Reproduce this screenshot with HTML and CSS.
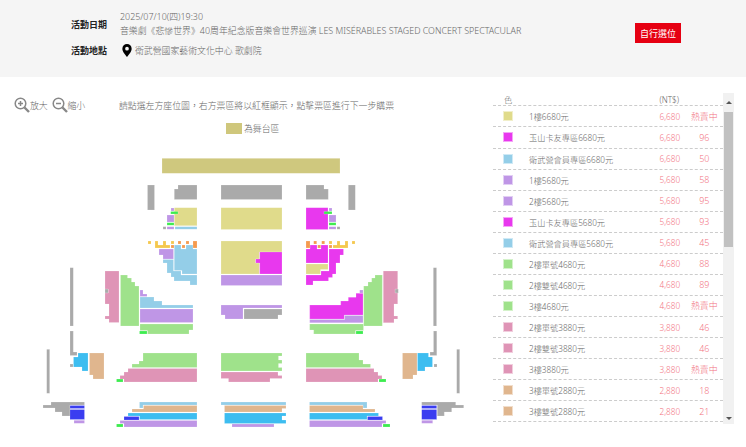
FILE: index.html
```html
<!DOCTYPE html>
<html lang="zh-Hant">
<head>
<meta charset="utf-8">
<title>選位</title>
<link rel="stylesheet" href="styles.css">
</head>
<body>
<header class="info">
  <div class="info-main">
    <div class="info-row info-row-date">
      <div class="info-label">活動日期</div>
      <div class="info-value">
        <div class="date-line">2025/07/10(四)19:30</div>
        <div class="title-line">音樂劇《悲慘世界》40周年紀念版音樂會世界巡演 LES MISÉRABLES STAGED CONCERT SPECTACULAR</div>
      </div>
    </div>
    <div class="info-row info-row-place">
      <div class="info-label">活動地點</div>
      <div class="info-value place">
        <svg class="pin" viewBox="0 0 10 14" width="10" height="13"><path fill-rule="evenodd" d="M5 0a5 5 0 0 1 5 5c0 3.400-3.400 6.600-5 9-1.600-2.400-5-5.600-5-9a5 5 0 0 1 5-5zm0 3a2 2 0 1 0 0 4 2 2 0 0 0 0-4z"/></svg>
        <span>衛武營國家藝術文化中心 歌劇院</span>
      </div>
    </div>
  </div>
  <button class="self-pick">自行選位</button>
</header>
<main class="content">
  <section class="map-panel">
    <div class="toolbar">
      <div class="zoom-btn">
        <svg class="zoom-icon" viewBox="0 0 16 16" width="16" height="16"><circle cx="6.500" cy="6.500" r="5.300"/><path class="thick" d="M10.500 10.500l4.500 4.500"/><path d="M4 6.500h5M6.500 4v5"/></svg>
        <span>放大</span>
      </div>
      <div class="zoom-btn">
        <svg class="zoom-icon" viewBox="0 0 16 16" width="16" height="16"><circle cx="6.500" cy="6.500" r="5.300"/><path class="thick" d="M10.500 10.500l4.500 4.500"/><path d="M4 6.500h5"/></svg>
        <span>縮小</span>
      </div>
      <p class="hint">請點選左方座位圖，右方票區將以紅框顯示，點擊票區進行下一步購票</p>
    </div>
    <div class="legend"><span class="legend-swatch"></span><span>為舞台區</span></div>
    <svg class="seatmap" viewBox="0 150 493 297" width="493" height="297">
      <rect class="stage" x="162" y="157.300" width="178" height="15"/>
      <g class="grey">
        <rect x="147.500" y="184" width="7" height="25"/>
        <polygon points="178,184 197,184 197,198.500 174.300,198.500 174.300,188 178,188"/>
        <rect x="221" y="184" width="61" height="14.500"/>
        <polygon points="306,184 324,184 324,188 328.300,188 328.300,198.500 306,198.500"/>
        <rect x="348.300" y="184" width="7" height="25"/>
        <rect x="163" y="225.700" width="3" height="2.500"/>
        <rect x="337" y="225.700" width="3" height="2.500"/>
        <rect x="70" y="266.700" width="3.300" height="58.300"/>
        <rect x="433.300" y="266.700" width="3.300" height="58.300"/>
        <polygon points="244,308 282,308 282,314 278,314 278,318 244,318"/>
        <polygon points="70,330 73.300,330 73.300,351 77,351 77,354.500 70,354.500"/>
        <polygon points="433.500,330 436.800,330 436.800,354.500 430,354.500 430,351 433.500,351"/>
        <rect x="46.700" y="348.300" width="3" height="44"/>
        <rect x="456.700" y="348.300" width="3" height="44"/>
        <rect x="70" y="363" width="3" height="3"/>
        <rect x="434" y="363" width="3" height="3"/>
        <rect x="105" y="288" width="3.300" height="4"/>
        <rect x="395" y="288" width="3.300" height="4"/>
        <polygon points="51,401 84.500,401 84.500,404 70,404 70,415 62,415 62,411 55,411 55,407 43,407 43,404 51,404"/>
        <polygon points="421.700,401 455.700,401 455.700,404 463.700,404 463.700,407 451.700,407 451.700,411 444.300,411 444.300,415 437.300,415 437.300,404 421.700,404"/>
      </g>
      <g class="yellow">
        <rect x="174.300" y="206.700" width="22.700" height="18"/>
        <rect x="221" y="206.700" width="61" height="21.800"/>
        <polygon points="221,240 282,240 282,251 259.300,251 259.300,258 255.500,258 255.500,262 259.300,262 259.300,273 221,273"/>
        <polygon points="306,263 328,263 328,268.500 320.500,268.500 320.500,273 306,273"/>
      </g>
      <g class="magenta">
        <rect x="306" y="206.700" width="22" height="21.800"/>
        <polygon points="259.700,251 282,251 282,273 259.700,273 259.700,262 255.700,262 255.700,258 259.700,258"/>
        <polygon points="306,248 310,248 310,244 317,244 317,248 321,248 321,244 328,244 328,262 306,262"/>
        <polygon points="329,248 343.500,248 343.500,254 340,254 340,262 336,262 336,273 332.500,273 332.500,276.500 328.500,276.500 328.500,280 313,280 313,284 306,284 306,274 321,274 321,270 329,270"/>
        <polygon points="309.700,304 340.700,304 340.700,300 348.300,300 348.300,296.300 356,296.300 356,292.300 363,292.300 363,314 344.300,314 344.300,318 309.700,318"/>
      </g>
      <g class="purple">
        <rect x="171" y="207" width="3" height="3"/>
        <rect x="167" y="214" width="7" height="7"/>
        <rect x="167" y="225.700" width="7" height="2.500"/>
        <rect x="329" y="207" width="3" height="3"/>
        <rect x="329" y="214" width="7" height="7"/>
        <rect x="329" y="225.700" width="7" height="2.500"/>
        <polygon points="159,248 173.500,248 173.500,258 163,258 163,254 159,254"/>
        <rect x="221" y="274" width="61" height="10.500"/>
        <polygon points="140,289 143,289 143,293 147,293 147,295.500 140,295.500"/>
        <rect x="140" y="308" width="53" height="13.500"/>
        <polygon points="221,304 282,304 282,307 243,307 243,318 225,318 225,314 221,314"/>
        <polygon points="344.700,314.500 363,314.500 363,321.700 309.700,321.700 309.700,318.500 344.700,318.500"/>
        <rect x="359.700" y="289" width="3.300" height="3"/>
        <polygon points="120,419.500 197,419.500 197,426 124,426 124,422.500 120,422.500"/>
        <rect x="232" y="423" width="42" height="3"/>
        <polygon points="309.500,419.500 386,419.500 386,422.500 382,422.500 382,426 309.500,426"/>
        <rect x="74" y="419.300" width="10.500" height="3"/>
        <rect x="421.700" y="419.300" width="11" height="3"/>
      </g>
      <g class="blue">
        <rect x="175" y="225.700" width="22" height="2.500"/>
        <polygon points="174.300,244 181,244 181,248 186,248 186,244 193,244 193,248 197,248 197,273 182,273 182,269.500 174.300,269.500"/>
        <polygon points="163,258.500 173.500,258.500 173.500,270 181,270 181,274 197,274 197,284 190,284 190,280 174,280 174,276 171,276 171,272 167,272 167,262 163,262"/>
        <polygon points="140,296 154,296 154,300 162,300 162,304 193,304 193,307 140,307"/>
        <polygon points="139.500,401 197,401 197,404 143,404 143,407 139.500,407"/>
        <rect x="221" y="401" width="65" height="3"/>
        <polygon points="309.500,401 367,401 367,407 363,407 363,404 309.500,404"/>
      </g>
      <g class="bright">
        <rect x="170.700" y="210.500" width="7.300" height="2.500"/>
        <rect x="167" y="221.700" width="7" height="2.500"/>
        <rect x="324" y="210.500" width="8" height="2.500"/>
        <rect x="329" y="221.700" width="7" height="2.500"/>
        <rect x="139.500" y="330" width="7.500" height="3"/>
        <rect x="356" y="330" width="7" height="3"/>
        <rect x="116.500" y="378" width="6.500" height="3"/>
        <rect x="379" y="378" width="7" height="3"/>
        <rect x="116.500" y="423" width="6.500" height="3"/>
        <rect x="383" y="423" width="7" height="3"/>
      </g>
      <g class="amber">
        <rect x="148" y="240" width="3" height="3"/>
        <polygon points="155,240 158,240 158,244 163,244 163,240 166,240 166,244 170,244 170,247 155,247"/>
        <rect x="171" y="240" width="3" height="3"/>
        <rect x="329" y="240" width="3" height="3"/>
        <polygon points="333,244 337,244 337,240 340,240 340,244 345,244 345,240 348,240 348,247 333,247"/>
        <rect x="352" y="240" width="3" height="3"/>
      </g>
      <g class="orange">
        <rect x="171" y="244" width="3" height="3"/>
        <rect x="178" y="240" width="3" height="3"/>
        <rect x="182" y="244" width="3" height="3"/>
        <rect x="186" y="240" width="3" height="3"/>
        <rect x="193" y="240" width="4" height="7"/>
        <rect x="306" y="240" width="4" height="7"/>
        <rect x="313.700" y="240" width="3" height="3"/>
        <rect x="317.700" y="244" width="3" height="3"/>
        <rect x="321.700" y="240" width="3" height="3"/>
        <rect x="329" y="244" width="3" height="3"/>
      </g>
      <g class="green">
        <polygon points="120.500,274 127.500,274 127.500,277 131.500,277 131.500,281 135,281 135,285 139,285 139,325 120.500,325"/>
        <polygon points="140,323 193,323 193,329 189,329 189,333 147.500,333 147.500,329.500 140,329.500"/>
        <polygon points="363.700,285 368,285 368,281 371.700,281 371.700,277 375,277 375,274 382.300,274 382.300,325 363.700,325"/>
        <polygon points="309.700,323 363.500,323 363.500,329.500 355.500,329.500 355.500,333 313.700,333 313.700,329 309.700,329"/>
        <polygon points="143,352 197,352 197,366.500 132,366.500 132,363 139,363 139,360 143,360"/>
        <polygon points="221,352 282,352 282,355 278.500,355 278.500,359 282,359 282,362.500 278.500,362.500 278.500,366.500 282,366.500 282,370 221,370"/>
        <polygon points="306,352 359,352 359,359 363,359 363,363 370.500,363 370.500,366.500 306,366.500"/>
      </g>
      <g class="pink">
        <polygon points="105,270 119,270 119,321.500 109,321.500 109,318 105,318 105,315 109,315 109,303 105,303 105,292 108.300,292 108.300,288 105,288"/>
        <polygon points="383.300,270 397.700,270 397.700,288 395,288 395,292 397.700,292 397.700,303 394,303 394,315 397.700,315 397.700,318 394,318 394,321.700 383.300,321.700"/>
        <polygon points="128,367.500 197,367.500 197,381 124,381 124,378 120,378 120,374.500 124,374.500 124,371 128,371"/>
        <polygon points="221,371 278,371 278,374.500 282,374.500 282,377.500 270,377.500 270,381 228.500,381 228.500,377.500 221,377.500"/>
        <polygon points="306,367.500 374,367.500 374,371 378,371 378,374.500 382,374.500 382,378 378,378 378,381 306,381"/>
      </g>
      <g class="tan">
        <polygon points="89.500,352 104,352 104,378 93,378 93,374 89.500,374"/>
        <polygon points="402.500,352 417,352 417,374 413,374 413,378 402.500,378"/>
        <polygon points="143.500,404.500 197,404.500 197,411 132,411 132,408 143.500,408"/>
        <polygon points="224.500,404.500 286,404.500 286,407.500 282,407.500 282,411 224.500,411"/>
        <polygon points="309.500,404.500 363,404.500 363,408 375,408 375,411 309.500,411"/>
      </g>
      <g class="cyan">
        <polygon points="78,352 88,352 88,370 82,370 82,366 73.500,366 73.500,356 78,356"/>
        <polygon points="417.500,352 428.500,352 428.500,356 432.500,356 432.500,366 425,366 425,370 417.500,370"/>
        <polygon points="128,412 197,412 197,418.500 139.500,418.500 139.500,415 128,415"/>
        <polygon points="224.500,412 286,412 286,415 282,415 282,419 286,419 286,422.500 224.500,422.500"/>
        <polygon points="309.500,412 378.500,412 378.500,415 367,415 367,418.500 309.500,418.500"/>
      </g>
      <g class="indigo">
        <rect x="70" y="404.500" width="14.500" height="3"/>
        <rect x="70" y="408.500" width="14.500" height="10"/>
        <rect x="421.700" y="404.500" width="15" height="3"/>
        <rect x="421.700" y="408.500" width="15" height="10"/>
        <rect x="124" y="415.500" width="15" height="3.500"/>
        <rect x="367.500" y="415.500" width="15" height="3.500"/>
      </g>
    </svg>
  </section>
  <section class="ticket-panel">
    <div class="ticket-list">
      <div class="ticket-table">
        <div class="row row-head"><span class="cell-color">色</span><span class="cell-name"></span><span class="cell-price">(NT$)</span><span class="cell-left"></span></div>
        <div class="row"><span class="cell-color"><i class="swatch s-yellow"></i></span><span class="cell-name">1樓6680元</span><span class="cell-price">6,680</span><span class="cell-left">熱賣中</span></div>
        <div class="row"><span class="cell-color"><i class="swatch s-magenta"></i></span><span class="cell-name">玉山卡友專區6680元</span><span class="cell-price">6,680</span><span class="cell-left">96</span></div>
        <div class="row"><span class="cell-color"><i class="swatch s-blue"></i></span><span class="cell-name">衛武營會員專區6680元</span><span class="cell-price">6,680</span><span class="cell-left">50</span></div>
        <div class="row"><span class="cell-color"><i class="swatch s-purple"></i></span><span class="cell-name">1樓5680元</span><span class="cell-price">5,680</span><span class="cell-left">58</span></div>
        <div class="row"><span class="cell-color"><i class="swatch s-purple"></i></span><span class="cell-name">2樓5680元</span><span class="cell-price">5,680</span><span class="cell-left">95</span></div>
        <div class="row"><span class="cell-color"><i class="swatch s-magenta"></i></span><span class="cell-name">玉山卡友專區5680元</span><span class="cell-price">5,680</span><span class="cell-left">93</span></div>
        <div class="row"><span class="cell-color"><i class="swatch s-blue"></i></span><span class="cell-name">衛武營會員專區5680元</span><span class="cell-price">5,680</span><span class="cell-left">45</span></div>
        <div class="row"><span class="cell-color"><i class="swatch s-green"></i></span><span class="cell-name">2樓單號4680元</span><span class="cell-price">4,680</span><span class="cell-left">88</span></div>
        <div class="row"><span class="cell-color"><i class="swatch s-green"></i></span><span class="cell-name">2樓雙號4680元</span><span class="cell-price">4,680</span><span class="cell-left">89</span></div>
        <div class="row"><span class="cell-color"><i class="swatch s-green"></i></span><span class="cell-name">3樓4680元</span><span class="cell-price">4,680</span><span class="cell-left">熱賣中</span></div>
        <div class="row"><span class="cell-color"><i class="swatch s-pink"></i></span><span class="cell-name">2樓單號3880元</span><span class="cell-price">3,880</span><span class="cell-left">46</span></div>
        <div class="row"><span class="cell-color"><i class="swatch s-pink"></i></span><span class="cell-name">2樓雙號3880元</span><span class="cell-price">3,880</span><span class="cell-left">46</span></div>
        <div class="row"><span class="cell-color"><i class="swatch s-pink"></i></span><span class="cell-name">3樓3880元</span><span class="cell-price">3,880</span><span class="cell-left">熱賣中</span></div>
        <div class="row"><span class="cell-color"><i class="swatch s-tan"></i></span><span class="cell-name">3樓單號2880元</span><span class="cell-price">2,880</span><span class="cell-left">18</span></div>
        <div class="row"><span class="cell-color"><i class="swatch s-tan"></i></span><span class="cell-name">3樓雙號2880元</span><span class="cell-price">2,880</span><span class="cell-left">21</span></div>
      </div>
      <div class="scrollbar">
        <div class="arrow arrow-up"></div>
        <div class="thumb"></div>
        <div class="arrow arrow-down"></div>
      </div>
    </div>
  </section>
</main>
</body>
</html>
```
FILE: styles.css
```css
* { box-sizing: border-box; }
html, body { margin: 0; height: 447px; overflow: hidden; background: #fff; }
body { font-family: "Noto Sans", "Noto Sans CJK TC", sans-serif; font-size: 8.900px; font-weight: 300; color: #666; }

.info { height: 77px; background: #f5f5f5; display: flex; align-items: flex-start; padding: 10px 65px 0 71px; justify-content: space-between; }
.info-main { display: flex; flex-direction: column; }
.info-row { display: flex; }
.info-row-date { align-items: center; height: 28px; }
.info-row-place { align-items: center; height: 14px; margin-top: 5px; }
.info-label { width: 49px; color: #222; font-size: 9px; font-weight: 700; font-family: "Noto Sans CJK TC", sans-serif; }
.date-line, .title-line { line-height: 14px; white-space: nowrap; }
.place { display: flex; align-items: center; gap: 3px; padding-left: 2px; }
.pin { fill: #000; flex: none; }
.self-pick { margin-top: 13px; width: 46px; height: 20px; padding: 0; border: 0; background: #e60012; color: #fff; font: 400 9px "Noto Sans CJK TC", sans-serif; }

.content { display: flex; height: 370px; }
.map-panel { width: 493px; flex: none; display: flex; flex-direction: column; }
.toolbar { display: flex; align-items: center; height: 16px; margin-top: 20px; padding-left: 14px; }
.zoom-btn { display: flex; align-items: center; width: 37.500px; }
.zoom-icon { fill: none; stroke: #888; stroke-width: 1.500; flex: none; }
.zoom-icon .thick { stroke-width: 2.400; }
.hint { margin: 0 0 0 30px; white-space: nowrap; }
.legend { display: flex; align-items: center; gap: 2px; margin: 9px 0 0 226px; height: 12px; }
.legend-swatch { width: 16px; height: 11px; background: #cfc77c; }
.seatmap { display: block; margin-top: 17px; flex: none; }
.seatmap rect, .seatmap polygon { stroke: rgba(255,255,255,.35); stroke-width: .5; }

.stage { fill: #cfc87e; }
.grey { fill: #aaa; }
.yellow { fill: #e0db8b; }
.magenta { fill: #e838ee; }
.purple { fill: #bf96e6; }
.blue { fill: #94cee8; }
.bright { fill: #3dec4f; }
.amber { fill: #f5c84e; }
.orange { fill: #f59a4e; }
.green { fill: #9fe28b; }
.pink { fill: #df94b6; }
.tan { fill: #e0b68e; }
.cyan { fill: #3dbdf0; }
.indigo { fill: #3a3df0; }

.ticket-panel { width: 241px; flex: none; padding-top: 16px; }
.ticket-list { display: flex; height: 331px; }
.ticket-table { width: 230px; flex: none; font-size: 8.200px; }
.row { display: grid; grid-template-columns: 36px 130.500px 21px 1fr; align-items: center; height: 21.070px; border-bottom: 1px dashed #ccc; }
.row-head { align-items: center; height: 13.400px; padding-bottom: 5px; }
.row-head .cell-color { padding-left: 11px; }
.row-head .cell-price { color: #666; }
.cell-color { padding-left: 10px; display: flex; }
.cell-name { white-space: nowrap; }
.cell-price { color: #f2737f; white-space: nowrap; }
.cell-left { color: #f2737f; text-align: center; white-space: nowrap; padding-left: 5px; font-size: 8.900px; }
.swatch { display: block; width: 10px; height: 10px; border: 1px solid rgba(255,255,255,.55); }
.s-yellow { background-color: #e0db8b; }
.s-magenta { background-color: #e838ee; }
.s-blue { background-color: #94cee8; }
.s-purple { background-color: #bf96e6; }
.s-green { background-color: #9fe28b; }
.s-pink { background-color: #df94b6; }
.s-tan { background-color: #e0b68e; }

.scrollbar { width: 11px; flex: none; background: #f1f1f1; display: flex; flex-direction: column; padding: 0 1px; }
.thumb { height: 135px; background: #c1c1c1; }
.arrow { flex: none; height: 19px; display: flex; justify-content: center; align-items: center; }
.arrow::before { content: ""; border-left: 3px solid transparent; border-right: 3px solid transparent; }
.arrow-up::before { border-bottom: 3px solid #555; }
.arrow-down { margin-top: auto; height: 12px; }
.arrow-down::before { border-top: 3px solid #555; }
```
